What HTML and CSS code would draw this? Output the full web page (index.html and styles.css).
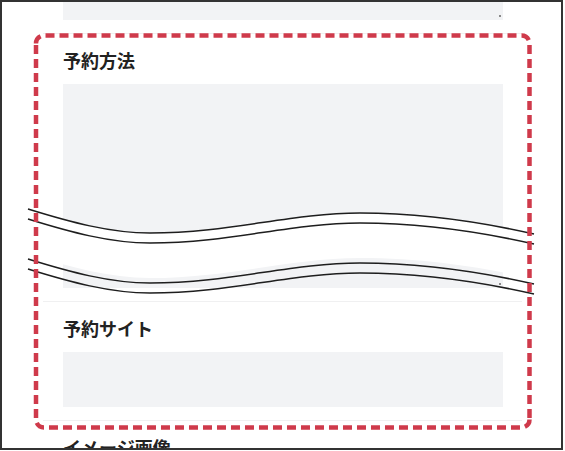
FILE: index.html
```html
<!DOCTYPE html>
<html lang="ja">
<head>
<meta charset="utf-8">
<title>予約方法</title>
<link rel="stylesheet" href="styles.css">
</head>
<body>
<div class="frame">
  <div class="column">
    <section class="field field-first">
      <div class="input textarea short"><span class="grip"></span></div>
    </section>
    <section class="field">
      <h2 class="label">予約方法</h2>
      <div class="input textarea tall"><span class="grip"></span></div>
    </section>
    <section class="field">
      <h2 class="label">予約サイト</h2>
      <div class="input single"></div>
    </section>
    <section class="field">
      <h2 class="label">イメージ画像</h2>
    </section>
  </div>
</div>
<svg class="overlay" width="565" height="451" viewBox="0 0 565 451" xmlns="http://www.w3.org/2000/svg">
  <path class="break-fill" d="M28,209 C70,222 110,233 150,233 C230,233 290,213 360,213 C430,213 490,224 534,234 L534,279 C490,269 430,258 360,258 C290,258 230,278 150,278 C110,278 70,267 28,254 Z"/>
  <g class="break-line">
    <path d="M28,209 C70,222 110,233 150,233 C230,233 290,213 360,213 C430,213 490,224 534,234"/>
    <path d="M28,219 C70,232 110,243 150,243 C230,243 290,223 360,223 C430,223 490,234 534,244"/>
    <path d="M28,259 C70,272 110,283 150,283 C230,283 290,263 360,263 C430,263 490,274 534,284"/>
    <path d="M28,269 C70,282 110,293 150,293 C230,293 290,273 360,273 C430,273 490,284 534,294"/>
  </g>
  <g class="highlight">
    <path d="M36,43.5 A8,8 0 0 1 44,35.5 L521.5,35.5"/>
    <path d="M521.5,35.5 A8,8 0 0 1 529.5,43.5 L529.5,419.5"/>
    <path d="M529.5,419.5 A8,8 0 0 1 521.5,427.5 L44,427.5"/>
    <path d="M44,427.5 A8,8 0 0 1 36,419.5 L36,43.5"/>
  </g>
</svg>
</body>
</html>
```
FILE: styles.css
```css
html, body {
  margin: 0;
  padding: 0;
  background: #ffffff;
}
body {
  position: relative;
  width: 565px;
  height: 451px;
  overflow: hidden;
  font-family: "Noto Sans CJK JP", "Noto Sans", sans-serif;
}
.frame {
  box-sizing: border-box;
  width: 563px;
  height: 450px;
  border: 2px solid #333333;
  overflow: hidden;
  background: #ffffff;
}
.column {
  margin-left: 41px;
  width: 479px;
}
.field {
  padding: 14px 19px 13px 20px;
  border-bottom: 1px solid #f0f0f1;
}
.field-first {
  padding-top: 0;
}
.label {
  margin: 0 0 12px 0;
  font-size: 18px;
  line-height: 24px;
  font-weight: 700;
  color: #222222;
}
.input {
  position: relative;
  background: #f2f3f5;
}
.short {
  height: 18px;
}
.tall {
  height: 204px;
}
.single {
  height: 55px;
}
.grip {
  position: absolute;
  right: 2px;
  bottom: 3px;
  width: 2px;
  height: 2px;
  background: #8a8a8a;
}
.overlay {
  position: absolute;
  left: 0;
  top: 0;
}
.break-fill {
  fill: #ffffff;
}
.break-line path {
  fill: none;
  stroke: #1e1e1e;
  stroke-width: 1.5;
}
.highlight path {
  fill: none;
  stroke: #cf3a4b;
  stroke-width: 4.5;
  stroke-dasharray: 9 5;
}
```
